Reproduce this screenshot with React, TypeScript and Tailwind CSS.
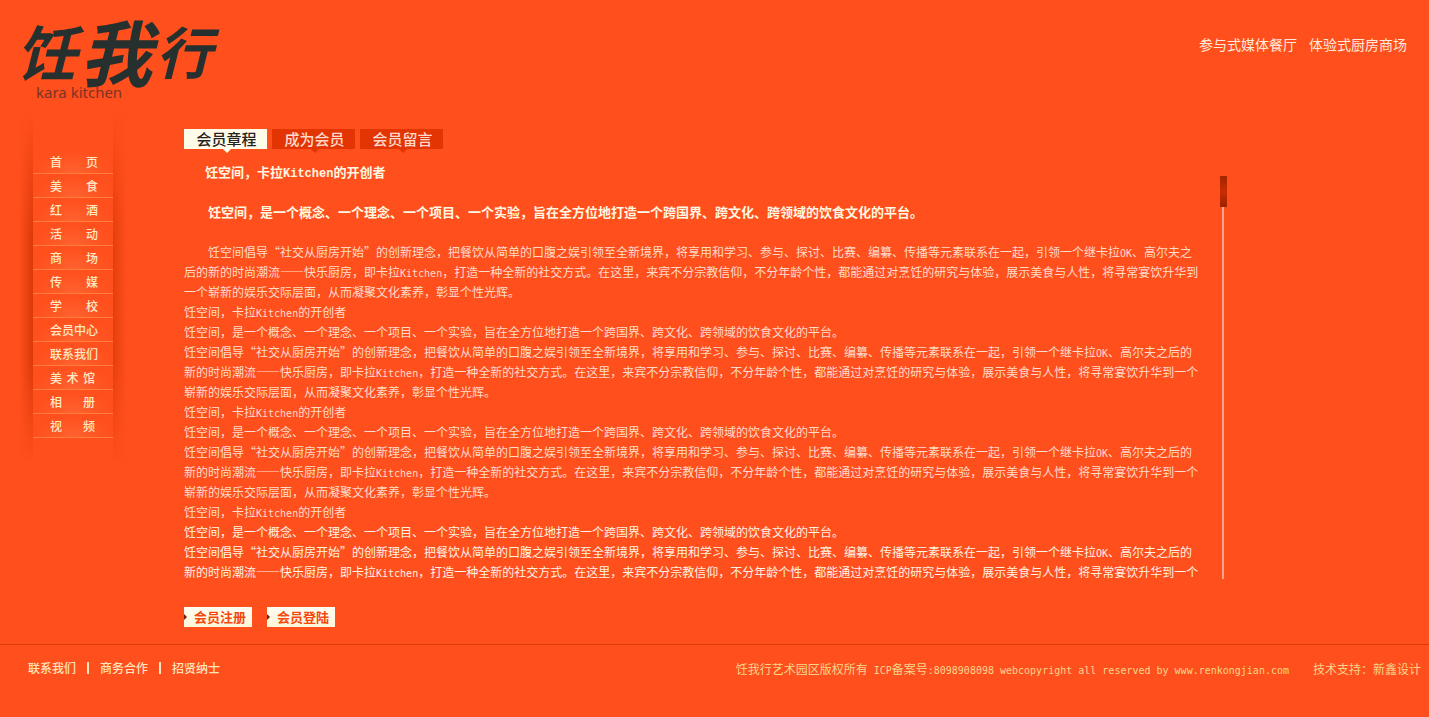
import React, { useState } from "react";

const menu: string[][] = [
  ["首", "页"],
  ["美", "食"],
  ["红", "酒"],
  ["活", "动"],
  ["商", "场"],
  ["传", "媒"],
  ["学", "校"],
  ["会员中心"],
  ["联系我们"],
  ["美", "术", "馆"],
  ["相", "册"],
  ["视", "频"],
];

const tabs = ["会员章程", "成为会员", "会员留言"];

function Latin({ children }: { children: React.ReactNode }) {
  return (
    <span className="font-['DejaVu_Sans_Mono','Liberation_Mono',monospace] text-[10px] leading-none">{children}</span>
  );
}

function Title() {
  return (
    <p>
      饪空间，卡拉<Latin>Kitchen</Latin>的开创者
    </p>
  );
}

function Summary() {
  return <p>饪空间，是一个概念、一个理念、一个项目、一个实验，旨在全方位地打造一个跨国界、跨文化、跨领域的饮食文化的平台。</p>;
}

function Story({ indent = false, partial = false }: { indent?: boolean; partial?: boolean }) {
  return (
    <p className={indent ? "indent-6" : ""}>
      饪空间倡导“社交从厨房开始”的创新理念，把餐饮从简单的口腹之娱引领至全新境界，将享用和学习、参与、探讨、比赛、编纂、传播等元素联系在一起，引领一个继卡拉
      <Latin>OK</Latin>、高尔夫之后的新的时尚潮流——快乐厨房，即卡拉<Latin>Kitchen</Latin>
      ，打造一种全新的社交方式。在这里，来宾不分宗教信仰，不分年龄个性，都能通过对烹饪的研究与体验，展示美食与人性，将寻常宴饮升华到一个
      {partial ? null : "崭新的娱乐交际层面，从而凝聚文化素养，彰显个性光辉。"}
    </p>
  );
}

function ActionButton({ label }: { label: string }) {
  return (
    <button
      type="button"
      className="flex h-5 w-[68px] items-center bg-gradient-to-b from-[#fffdf2] to-[#fdf6d8] text-[13px] font-bold leading-5 text-[#f5480f]"
    >
      <svg className="h-[6px] w-[3px]" viewBox="0 0 3 6" aria-hidden="true">
        <path d="M0 0L3 3L0 6Z" fill="#7a1c00" />
      </svg>
      <span className="ml-[7px] whitespace-nowrap">{label}</span>
    </button>
  );
}

export default function App() {
  const [active, setActive] = useState(0);
  return (
    <div
      lang="zh-CN"
      className="flex min-h-screen flex-col bg-[#ff4f1c] font-['Noto_Sans_CJK_SC',sans-serif] text-xs text-[#fff3e4]"
    >
      <header className="flex h-[110px] items-start justify-between pl-4 pr-[22px]">
        <a href="#" className="flex flex-col text-[#26302f]">
          <span className="mt-4 flex items-center gap-1 font-bold italic leading-[68px]">
            <span className="text-[60px]">饪</span>
            <span className="text-[72px]">我</span>
            <span className="text-[56px]">行</span>
          </span>
          <span className="ml-5 font-['Noto_Sans',sans-serif] text-[15px] leading-4 text-[#7a3326]">
            kara kitchen
          </span>
        </a>
        <p className="mt-[34px] flex gap-3 text-sm leading-5 text-[#ffeadc]">
          <span>参与式媒体餐厅</span>
          <span>体验式厨房商场</span>
        </p>
      </header>

      <div className="flex flex-1 items-start">
        <div className="flex w-[184px] shrink-0 pl-[19px]">
          <div className="w-[14px] bg-gradient-to-l from-[#db3909] to-[#ff4f1c] [mask-image:linear-gradient(to_bottom,transparent,black_35%,black_70%,transparent)]" />
          <nav className="w-20 pb-7 pt-10">
            <ul>
              {menu.map((parts, i) => (
                <li
                  key={parts.join("")}
                  className="h-6 border-b border-[#ff7e40] bg-[radial-gradient(ellipse_at_bottom,#ff6230,#ff4f1c_70%)]"
                >
                  <a
                    href="#"
                    className={
                      i > 8
                        ? "ml-[17px] flex w-[45px] justify-between whitespace-nowrap font-medium leading-[23px] text-[#ffe9c6]"
                        : "ml-[17px] flex w-12 justify-between whitespace-nowrap font-medium leading-[23px] text-[#ffe9c6]"
                    }
                  >
                    {parts.map((p) => (
                      <span key={p}>{p}</span>
                    ))}
                  </a>
                </li>
              ))}
            </ul>
          </nav>
          <div className="w-[14px] bg-gradient-to-r from-[#e53e0e] to-[#ff4f1c] [mask-image:linear-gradient(to_bottom,transparent,black_35%,black_70%,transparent)]" />
        </div>

        <main className="min-w-0 flex-1 pt-[19px]">
          <div role="tablist" className="flex gap-[5px]">
            {tabs.map((t, i) => (
              <button
                key={t}
                type="button"
                role="tab"
                aria-selected={i === active}
                onClick={() => setActive(i)}
                className={
                  i === active
                    ? "relative h-5 w-[83px] bg-[#fffbe9] pl-[2px] text-[15px] font-medium leading-5 text-[#26221f]"
                    : "relative h-5 w-[83px] bg-[#e23503] pl-[2px] text-[15px] font-medium leading-5 text-[#ffd9cc]"
                }
              >
                {t}
                <svg
                  className={i === active ? "absolute left-[39px] top-5 text-[#fffbe9]" : "absolute left-[39px] top-5 text-[#e23503]"}
                  width="8"
                  height="4"
                  viewBox="0 0 8 4"
                  aria-hidden="true"
                >
                  <path d="M0 0H8L4 4Z" fill="currentColor" />
                </svg>
              </button>
            ))}
          </div>

          <div className="mt-[13px] flex items-start">
            <div className="w-full max-w-[1016px] leading-5 text-[#ffdccb]">
              <h1 className="pl-[21px] text-[13px] font-bold leading-5 text-[#fff8e2]">
                饪空间，卡拉<span className="font-['Liberation_Mono',monospace] text-xs leading-none">Kitchen</span>的开创者
              </h1>
              <h2 className="my-5 pl-6 text-[13px] font-bold leading-5 text-[#fff8e2]">
                饪空间，是一个概念、一个理念、一个项目、一个实验，旨在全方位地打造一个跨国界、跨文化、跨领域的饮食文化的平台。
              </h2>
              <Story indent />
              <Title />
              <Summary />
              <Story />
              <Title />
              <Summary />
              <Story />
              <Title />
              <div className="text-[#fff3e4]">
                <Summary />
                <Story partial />
              </div>
            </div>
            <div aria-hidden="true" className="ml-5 mt-[14px] flex h-[403px] w-[7px] shrink-0 flex-col">
              <div className="h-[31px] w-[7px] bg-gradient-to-b from-[#a32400] via-[#c82d02] to-[#9c2200]" />
              <div className="ml-[2px] w-[2px] flex-1 bg-[#ffa68c]" />
            </div>
          </div>

          <div className="mt-[25px] flex gap-[15px]">
            <ActionButton label="会员注册" />
            <ActionButton label="会员登陆" />
          </div>
        </main>
      </div>

      <footer className="flex h-[73px] items-start justify-between whitespace-nowrap border-t border-[#e03a08] pl-7 pr-2">
        <nav className="mt-[13px] flex items-center gap-[11px] font-medium leading-5 text-[#ffe6bd]">
          <a href="#">联系我们</a>
          <span className="h-3 w-[2px] bg-[#ffe6bd]" />
          <a href="#">商务合作</a>
          <span className="h-3 w-[2px] bg-[#ffe6bd]" />
          <a href="#">招贤纳士</a>
        </nav>
        <div className="mt-[14px] flex gap-6 leading-5 text-[#f7d58c]">
          <p>
            饪我行艺术园区版权所有<Latin> ICP</Latin>备案号<Latin>:8098908098 webcopyright all reserved by www.renkongjian.com</Latin>
          </p>
          <p>技术支持：新鑫设计</p>
        </div>
      </footer>
    </div>
  );
}
